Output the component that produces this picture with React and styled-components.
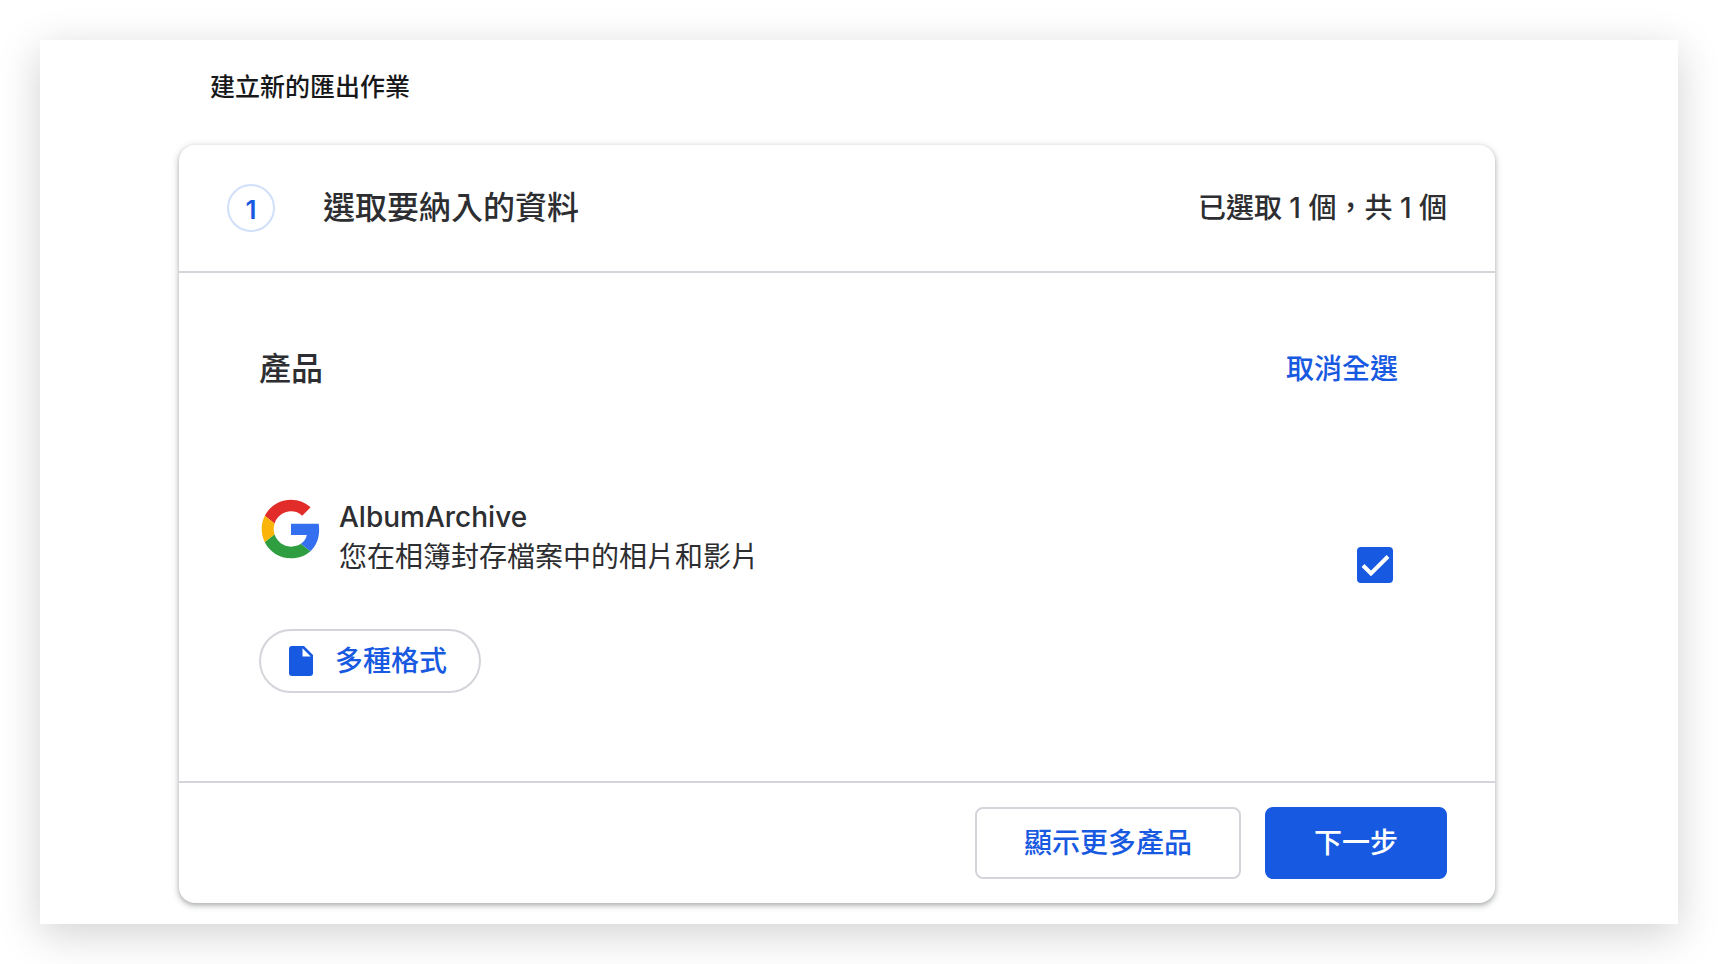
import { useState } from "react";
import styled, { createGlobalStyle } from "styled-components";

const GlobalStyle = createGlobalStyle`
    * {
        box-sizing: border-box;
    }
    body {
        margin: 0;
        background: #fff;
        color: #2d2e31;
        font-family: Inter, "Noto Sans CJK TC", sans-serif;
        font-size: 28px;
        line-height: 40px;
    }
    h1, h2, h3, p {
        margin: 0;
        font-weight: 500;
    }
    button {
        font: inherit;
        cursor: pointer;
    }
`

const Page = styled.div`
    padding: 40px;
`

const Panel = styled.main`
    padding: 31px 183px 21px 139px;
    background: #fff;
    box-shadow: 0 10px 40px rgba(0, 0, 0, 0.18);
`

const PageTitle = styled.h1`
    padding-left: 31px;
    margin-bottom: 42px;
    color: #17181a;
    font-size: 25px;
    line-height: 32px;
`

const Card = styled.section`
    border-radius: 16px;
    background: #fff;
    box-shadow: 0 2px 4px rgba(60, 64, 67, 0.3), 0 2px 6px 2px rgba(60, 64, 67, 0.15);
`

const CardHeader = styled.header`
    display: flex;
    align-items: center;
    padding: 39px 48px;
    border-bottom: 2px solid #d3d5da;
`

const StepNumber = styled.span`
    display: flex;
    align-items: center;
    justify-content: center;
    width: 48px;
    height: 48px;
    padding-top: 4px;
    margin-right: 48px;
    border: 2px solid #d0dffa;
    border-radius: 50%;
    color: #1759e0;
    font-size: 26px;
    font-weight: 600;
`

const StepTitle = styled.h2`
    font-size: 32px;
    line-height: 48px;
`

const Counter = styled.p`
    margin-left: auto;
`

const CardBody = styled.div`
    padding: 72px 97px 88px 80px;
`

const ListHeader = styled.div`
    display: flex;
    align-items: center;
    justify-content: space-between;
    margin-bottom: 104px;
`

const ListTitle = styled.h3`
    font-size: 32px;
    line-height: 48px;
`

const TextButton = styled.button`
    padding: 0;
    border: 0;
    background: none;
    color: #1759e0;
    font-weight: 500;
`

const Product = styled.article`
    display: flex;
    align-items: flex-start;
    justify-content: space-between;
`

const ProductInfo = styled.label`
    display: flex;
    gap: 16px;
    margin-bottom: 52px;
`

const ProductName = styled.span`
    display: block;
    font-weight: 500;
`

const ProductDescription = styled.span`
    display: block;
`

const CheckboxBox = styled.span`
    display: grid;
    margin: 50px 5px 0 0;

    > * {
        grid-area: 1 / 1;
    }
    svg {
        pointer-events: none;
    }
`

const Checkbox = styled.input`
    appearance: none;
    width: 36px;
    height: 36px;
    margin: 0;
    border: 4px solid #1759e0;
    border-radius: 4px;
    background: #fff;

    &:checked {
        background: #1759e0;
    }
`

const FormatButton = styled.button`
    display: flex;
    align-items: center;
    gap: 16px;
    height: 64px;
    padding: 0 32px 0 22px;
    border: 2px solid #d3d5da;
    border-radius: 32px;
    background: #fff;
    color: #1759e0;
    font-weight: 500;
`

const CardFooter = styled.footer`
    display: flex;
    justify-content: flex-end;
    gap: 24px;
    padding: 24px 48px;
    border-top: 2px solid #d3d5da;
`

const Button = styled.button`
    height: 72px;
    padding: 0 47px;
    border: 2px solid ${({ $primary }) => ($primary ? "#1759e0" : "#d3d5da")};
    border-radius: 8px;
    background: ${({ $primary }) => ($primary ? "#1759e0" : "#fff")};
    color: ${({ $primary }) => ($primary ? "#fff" : "#1759e0")};
    font-weight: 500;
`

function GoogleLogo(){
    return(
        <svg width="64" height="64" viewBox="0 0 48 48" aria-hidden="true">
            <path fill="#e22c29" d="M24 10.75c3.23 0 6.13 1.11 8.41 3.29l6.31-6.31C34.91 4.18 29.93 2 24 2 15.4 2 7.96 6.93 4.34 14.12l7.35 5.7c1.73-5.2 6.58-9.07 12.31-9.07z"/>
            <path fill="#fab40a" d="M11.69 28.18C11.25 26.86 11 25.45 11 24s.25-2.86.69-4.18v0l-7.35-5.7C2.85 17.09 2 20.45 2 24s.85 6.91 2.34 9.88l7.35-5.7z"/>
            <path fill="#2e9e41" d="M24 46c5.94 0 10.92-1.97 14.56-5.33l-7.11-5.52c-1.97 1.32-4.49 2.1-7.45 2.1-5.73 0-10.58-3.87-12.31-9.07l-7.35 5.7C7.96 41.07 15.4 46 24 46z"/>
            <path fill="#346ff0" d="M45.12 24.5c0-1.56-.14-3.06-.4-4.5H24v8.51h11.84c-.51 2.75-2.06 5.08-4.39 6.64l7.11 5.52c4.16-3.83 6.56-9.47 6.56-16.17z"/>
        </svg>
    )
}

function FileIcon(){
    return(
        <svg width="36" height="36" viewBox="0 0 24 24" fill="currentColor" aria-hidden="true">
            <path d="M6 2a2 2 0 0 0-2 2v16a2 2 0 0 0 2 2h12a2 2 0 0 0 2-2V8l-6-6H6zm7 7V3.500L18.500 9H13z"/>
        </svg>
    )
}

function App(){

    const [selected, setSelected] = useState(true)
    const count = selected ? 1 : 0

    return(
        <Page lang="zh-Hant-TW">
            <GlobalStyle />
            <Panel>
                <PageTitle>建立新的匯出作業</PageTitle>
                <Card>
                    <CardHeader>
                        <StepNumber>1</StepNumber>
                        <StepTitle>選取要納入的資料</StepTitle>
                        <Counter>已選取 {count} 個，共 1 個</Counter>
                    </CardHeader>
                    <CardBody>
                        <ListHeader>
                            <ListTitle>產品</ListTitle>
                            <TextButton type="button" onClick={() => setSelected(!selected)}>
                                {selected ? "取消全選" : "全選"}
                            </TextButton>
                        </ListHeader>
                        <Product>
                            <div>
                                <ProductInfo htmlFor="album-archive">
                                    <GoogleLogo />
                                    <span>
                                        <ProductName>AlbumArchive</ProductName>
                                        <ProductDescription>您在相簿封存檔案中的相片和影片</ProductDescription>
                                    </span>
                                </ProductInfo>
                                <FormatButton type="button">
                                    <FileIcon />
                                    多種格式
                                </FormatButton>
                            </div>
                            <CheckboxBox>
                                <Checkbox
                                    id="album-archive"
                                    type="checkbox"
                                    checked={selected}
                                    onChange={evento => setSelected(evento.target.checked)}
                                />
                                <svg width="36" height="36" viewBox="0 0 36 36" fill="none" stroke="#fff" strokeWidth="4" aria-hidden="true">
                                    <path d="M6 18.500l8 8L31 9.500"/>
                                </svg>
                            </CheckboxBox>
                        </Product>
                    </CardBody>
                    <CardFooter>
                        <Button type="button">顯示更多產品</Button>
                        <Button type="button" $primary>下一步</Button>
                    </CardFooter>
                </Card>
            </Panel>
        </Page>
    )
}

export default App
